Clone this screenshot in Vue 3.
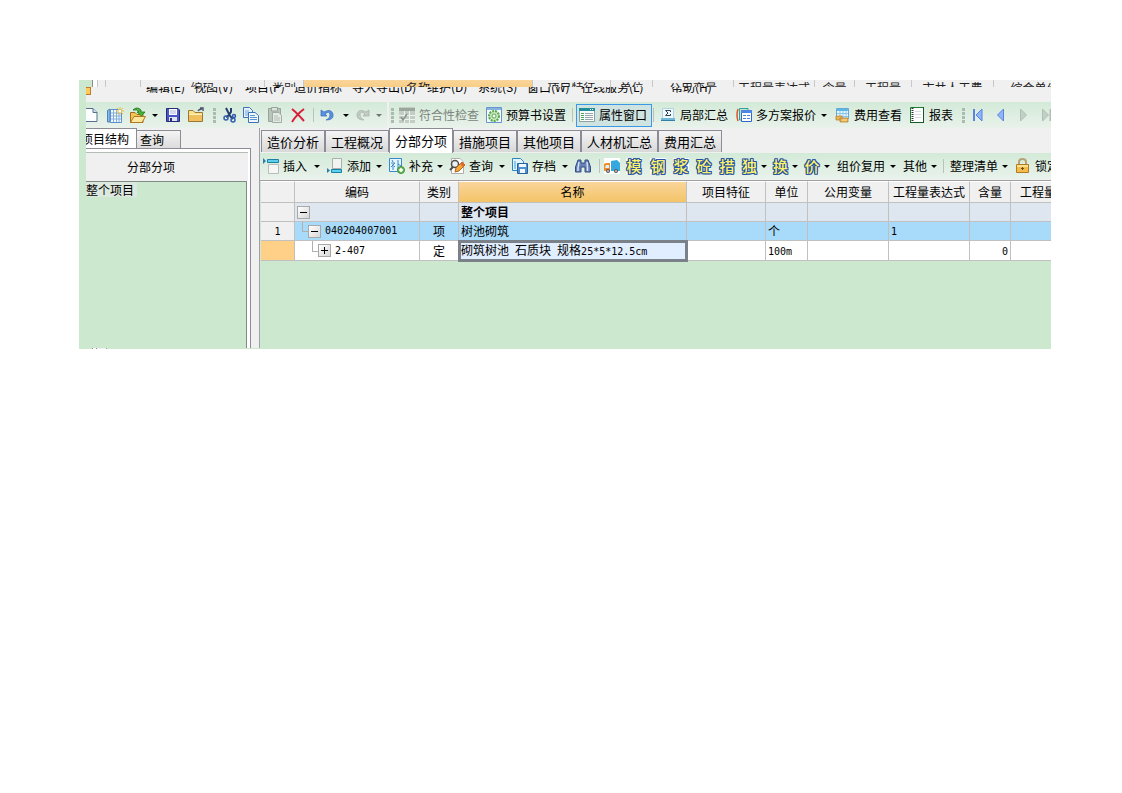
<script setup>
const menus = ['编辑(E)', '视图(V)', '项目(P)', '造价指标', '导入导出(D)', '维护(D)', '系统(S)', '窗口(W)', '在线服务(L)', '帮助(H)']
const strip = ['', '', '', '', '编码', '类别', '名称', '项目特征', '单位', '公用变量', '工程量表达式', '含量', '工程量', '市井人工费', '综合单价']
const tabs = ['造价分析', '工程概况', '分部分项', '措施项目', '其他项目', '人材机汇总', '费用汇总']
const heads = ['', '编码', '类别', '名称', '项目特征', '单位', '公用变量', '工程量表达式', '含量', '工程量']
const seals = ['模', '钢', '浆', '砼', '措', '独', '换', '价']
</script>

<template>
  <main class="shot">
    <div class="strip">
      <span v-for="(s, i) in strip" :key="i" :class="{ hot: s === '名称', leaf: i === 0, blank: i === 1 }">{{ s }}</span>
    </div>
    <nav class="menu">
      <span class="app-mark"></span>
      <button v-for="m in menus" :key="m">{{ m }}</button>
    </nav>

    <div class="bar bar-main">
      <button aria-label="新建"><svg viewBox="0 0 16 16"><path d="M-2 1.500H7L11 5.500V14.500H-2z" fill="#fdfeff" stroke="#56708f" /><path d="M7 1.500V5.500H11" fill="#d4e1f3" stroke="#56708f" /></svg></button>
      <button aria-label="新建项目"><svg class="wide" viewBox="0 0 18 16"><path d="M1.500 3.500L4 2V15H1.500z" fill="#89b9e7" stroke="#4a83bd" /><path d="M4.500 2.500H15.500V15.500H4.500z" fill="#f5faff" stroke="#5990c9" /><path d="M7.500 3V15M10.500 3V15M13 3V15M5 6H15M5 9H15M5 12H15" stroke="#83aedb" /><path d="M14 0V8M10 4H18M11 1L17 7M17 1L11 7" stroke="#f0bd3e" stroke-width="1" /><circle cx="14" cy="4" r="1.500" fill="#fffbe5" /></svg></button>
      <button aria-label="打开"><svg viewBox="0 0 16 16"><path d="M.5 15.500V5.500H5L7 7.500H13V15.500z" fill="#f2c551" stroke="#a66d1f" /><path d="M.5 15.500L4 9.500H15.500L12 15.500z" fill="#ffe79b" stroke="#b17923" /><path d="M3 3Q7 -1 11 3V5H15L11.500 9L7 5H9Q7 2 3 3z" fill="#4fb63b" stroke="#17731d" stroke-width=".8" /></svg><i></i></button>
      <button aria-label="保存"><svg viewBox="0 0 16 16"><path d="M1.500 1.500H13L14.500 3V14.500H1.500z" fill="#4a56c6" stroke="#252c78" /><path d="M4 2H12V8H4z" fill="#fff" /><path d="M5 4H11M5 6H11" stroke="#a8b4d7" /><path d="M4 10H12V14H4z" fill="#dfe4ef" /><path d="M5 11H7V14H5z" fill="#29317f" /></svg></button>
      <button aria-label="文件夹"><svg viewBox="0 0 16 16"><path d="M.5 14.500V3.500H5L7 5.500H14.500V14.500z" fill="#fde08a" stroke="#9c7738" /><path d="M1 8H14V14H1z" fill="#efc05b" /><path d="M1 7.500H14" stroke="#fff2bf" /><path d="M10 4Q11 2 14 2M12 1H15V4" fill="none" stroke="#49566d" stroke-width="1.500" /></svg></button>
      <span class="grip"></span>
      <button aria-label="剪切"><svg viewBox="0 0 16 16"><path d="M4 1L8 9L11 12M9 1V5L6 9L4 10" fill="none" stroke="#243f70" stroke-width="2" /><circle cx="4" cy="11" r="2" fill="none" stroke="#315fad" stroke-width="1.500" /><circle cx="11" cy="13" r="2" fill="none" stroke="#315fad" stroke-width="1.500" /><circle cx="12" cy="9" r="1.500" fill="none" stroke="#315fad" stroke-width="1.500" /></svg></button>
      <button aria-label="复制"><svg viewBox="0 0 16 16"><path d="M.5.5H6.500L9.500 3.500V10.500H.5z" fill="#e6f0ff" stroke="#3974b9" /><path d="M2 4H6M2 6H7M2 8H5" stroke="#6fa4dd" /><path d="M5.500 5.500H12L15.500 8.500V15.500H5.500z" fill="#f2f7ff" stroke="#3974b9" /><path d="M7 8.500H12M7 10.500H14M7 12.500H14" stroke="#5995d4" /></svg></button>
      <button aria-label="粘贴"><svg viewBox="0 0 16 16"><path d="M1.500 1.500H13.500V14.500H1.500z" fill="#b9c4bb" stroke="#98a49b" /><path d="M4.500.5H10.500V4H4.500z" fill="#dce3dc" stroke="#98a49b" /><path d="M5.500 5.500H12L14.500 8.500V15.500H5.500z" fill="#e4eae4" stroke="#a1aca2" /><path d="M7 9H11M7 11H13M7 13H13" stroke="#b5beb6" /></svg></button>
      <button aria-label="删除"><svg viewBox="0 0 16 16"><path d="M2 2Q7 6 14 14M14 2Q7 7 2 15" fill="none" stroke="#d8203a" stroke-width="2" /></svg></button>
      <span class="sep"></span>
      <button aria-label="撤销"><svg viewBox="0 0 16 16"><path d="M2 3V9H8L6 7Q11 3 11 8Q11 12 7 13Q15 13 14 7Q12 1 5 5z" fill="#5a91e4" stroke="#3769b5" stroke-width=".7" /></svg><i></i></button>
      <button class="off redo" aria-label="重做" disabled><svg viewBox="0 0 16 16"><path d="M13 3V9H7L9 7Q4 3 4 8Q4 12 8 13Q0 13 1 7Q3 1 10 5z" fill="#c1cbc2" stroke="#a5b0a6" stroke-width=".7" /></svg><i></i></button>
      <span class="joint"></span>
      <span class="grip"></span>
      <button class="off" disabled><svg viewBox="0 0 16 16"><path d="M0 0H16V16H0z" fill="#c3cdc4" /><path d="M0 1H16V4H0z" fill="#9ba79d" /><path d="M0 8.500H16M0 12.500H16M5.500 4V16M10.500 4V16" stroke="#edf2ed" /><path d="M2 10L4 13L8 7" fill="none" stroke="#849287" stroke-width="1.500" /></svg>符合性检查</button>
      <button><svg viewBox="0 0 16 16"><path d="M.5.5H15.500V15.500H.5z" fill="#f6fbf7" stroke="#6795cb" /><path d="M1 1H15V3H1z" fill="#85b2e3" /><circle cx="8" cy="9" r="5" fill="#c7e7ba" stroke="#57a951" stroke-width="2" stroke-dasharray="2 1" /><circle cx="8" cy="9" r="2" fill="#fff" stroke="#57a951" /></svg>预算书设置</button>
      <span class="sep"></span>
      <button class="picked"><svg viewBox="0 0 16 16"><path d="M.5 1.500H15.500V14.500H.5z" fill="#fafcfb" stroke="#8ba19c" /><path d="M0 1H16V4H0z" fill="#238c99" /><path d="M11 2.500H15" stroke="#fff" stroke-dasharray="1 1" /><path d="M2 6.500H5M2 8.500H5M2 10.500H5M2 12.500H5" stroke="#4ba65a" /><path d="M6 6.500H14M6 8.500H14M6 10.500H14M6 12.500H14" stroke="#9aa5ad" /></svg>属性窗口</button>
      <span class="sep"></span>
      <button><svg viewBox="0 0 16 16"><path d="M2.500 1.500H13.500V11.500H2.500z" fill="#eef8ff" stroke="#b5d2df" /><path d="M10.500 5V3.500H5.500L8 6L5.500 8.500H10.500V7" fill="none" stroke="#34434f" /><path d="M1 11H15V14H1z" fill="#70b7d9" /><path d="M1 13.500H15" stroke="#347fa8" /></svg>局部汇总</button>
      <button><svg viewBox="0 0 16 16"><path d="M2 2Q0 8 2 14" fill="none" stroke="#e2572a" stroke-width="1.500" /><path d="M3.500 1.500H12V13H3.500z" fill="#c6e7c1" stroke="#2fa1a1" /><path d="M5.500 3.500H15.500V14.500H5.500z" fill="#fff" stroke="#3266d0" /><path d="M5 3H16V6H5z" fill="#4d86e7" /><path d="M7 8.500H10M11 8.500H14M7 11.500H10M11 11.500H14" stroke="#4c7ed9" /></svg>多方案报价<i></i></button>
      <button><svg viewBox="0 0 16 16"><path d="M2.500 1.500H14.500V11.500H2.500z" fill="#e9f7ff" stroke="#65a9d5" /><path d="M3 2H14V4H3z" fill="#5eb6e8" /><path d="M3 6.500H14M3 9.500H14M6 4V11M9 4V11M12 4V11" stroke="#8bc5e7" /><path d="M2 9H8V13H2zM6 11H14V15H6z" fill="#e7b557" stroke="#b47b2b" stroke-width=".7" /><path d="M7 13H13" stroke="#fbe3a0" /></svg>费用查看</button>
      <button><svg viewBox="0 0 16 16"><path d="M1.500.5H14.500V15.500H1.500z" fill="#fff" stroke="#1d7c32" /><path d="M14.500 0V16M1 15.500H15" stroke="#195725" /><path d="M3.500 1V15" stroke="#333" stroke-width="2" stroke-dasharray="1 1" /><path d="M6 4.500H12M6 7.500H12M6 10.500H12" stroke="#d4dcde" /></svg>报表</button>
      <span class="grip tail"></span>
      <button aria-label="第一条"><svg viewBox="0 0 16 16"><path d="M4 2V14" stroke="#5985df" stroke-width="2" /><path d="M12 2V14L6 8z" fill="#91b3fa" stroke="#5985df" /></svg></button>
      <button aria-label="上一条"><svg viewBox="0 0 16 16"><path d="M9.500 2V14L3.500 8z" fill="#91b3fa" stroke="#5985df" /></svg></button>
      <button aria-label="下一条" disabled><svg viewBox="0 0 16 16"><path d="M1.500 2V14L7.500 8z" fill="#c2cfc4" stroke="#b1beb3" /></svg></button>
      <button aria-label="最后一条" disabled><svg viewBox="0 0 16 16"><path d="M1.500 2V14L7.500 8z" fill="#c2cfc4" stroke="#b1beb3" /><path d="M9.500 2V14" stroke="#b1beb3" stroke-width="2" /></svg></button>
    </div>

    <div class="body">
      <aside class="side">
        <div class="side-tabs">
          <button class="on">项目结构</button>
          <button>查询</button>
        </div>
        <div class="side-frame">
          <h2>分部分项</h2>
          <div class="tree"><button>整个项目</button></div>
        </div>
      </aside>

      <section class="work">
        <div class="tabs">
          <button v-for="t in tabs" :key="t" :class="{ on: t === '分部分项' }">{{ t }}</button>
        </div>

        <div class="bar bar-work">
          <button><svg viewBox="0 0 16 16"><path d="M0 0L3 3L0 6z" fill="#2d7eae" /><path d="M4.500 1.500H15.500V4.500H4.500z" fill="#5dd0ee" stroke="#1b80a5" /><path d="M5.500 6.500H15.500V15.500H5.500z" fill="#f5f6f5" stroke="#b6bfb9" /></svg>插入<i></i></button>
          <button><svg viewBox="0 0 16 16"><path d="M5.500 .5H14.500V10.500H5.500z" fill="#f2f4f2" stroke="#a8b2ad" /><path d="M0 10L3 12.500L0 15z" fill="#2d7eae" /><path d="M4.500 11.500H14.500V14.500H4.500z" fill="#5dd0ee" stroke="#1b80a5" /></svg>添加<i></i></button>
          <button><svg viewBox="0 0 16 16"><path d="M.5.5H12.500V13.500H.5z" fill="#e7f5ff" stroke="#3789c7" /><path d="M3 2L4 4M2 5H6L2 9M4 6V12M5 8L6 9M9 2V12M9 6L12 8" fill="none" stroke="#3789c7" /><circle cx="12" cy="12" r="3.500" fill="#70bb59" stroke="#438e3e" /><path d="M12 10V14M10 12H14" stroke="#fff" stroke-width="1.500" /></svg>补充<i></i></button>
          <button><svg viewBox="0 0 16 16"><path d="M2.500.5H11L14.500 4V15.500H2.500z" fill="#fff" stroke="#b1afae" /><circle cx="6" cy="6" r="3.500" fill="#eaf1f5" stroke="#514b4b" stroke-width="1.500" /><path d="M4 9L1 12" stroke="#514b4b" stroke-width="2" /><path d="M6 14L7 10L13 4L16 7L10 13z" fill="#f6a832" stroke="#ad6520" /><path d="M13 4L16 7L14 9L11 6z" fill="#e36a30" /></svg>查询<i></i></button>
          <button><svg viewBox="0 0 16 16"><path d="M.5.5H8.500L11.500 3.500V12.500H.5z" fill="#e3f3fd" stroke="#2d83bb" /><path d="M2 3H4V11H2z" fill="#91c8e7" /><path d="M5.500 5.500H15.500V15.500H5.500z" fill="#528fce" stroke="#285f9f" /><path d="M7 6H14V9H7zM8 11H13V15H8z" fill="#eef7ff" /></svg>存档<i></i></button>
          <button aria-label="查找"><svg viewBox="0 0 16 16"><path d="M3 2H6V5H10V2H13L15.500 9V14H10V9H6V14H.5V9z" fill="#6983b9" stroke="#354d82" /><path d="M4 4L3 10V13M12 4L12.500 10V13" fill="none" stroke="#d6e2f6" stroke-width="1.500" /></svg></button>
          <span class="sep"></span>
          <button aria-label="运输"><svg viewBox="0 0 16 16"><path d="M0 0H16V16H0z" fill="#fff" /><path d="M7 3L13 2L16 5V13H7z" fill="#35a9df" /><path d="M0 6L2 5H6V13H0z" fill="#f18b2b" /><path d="M2 7H5V10H1z" fill="#d9f2fb" /><circle cx="4" cy="13" r="2" fill="#555" /><circle cx="12" cy="13" r="2" fill="#555" /><path d="M3 13H5M11 13H13" stroke="#fff" /></svg></button>
          <button v-for="(s, i) in seals" :key="s" class="seal" :class="{ paper: i < 3 }"><b>{{ s }}</b><i v-if="i > 4"></i></button>
          <button>组价复用<i></i></button>
          <button>其他<i></i></button>
          <span class="sep"></span>
          <button>整理清单<i></i></button>
          <button><svg viewBox="0 0 16 16"><path d="M4 7V4Q4 1 7.500 1Q11 1 11 4V7" fill="none" stroke="#b9a276" stroke-width="2" /><path d="M1.500 6.500H13.500V14.500H1.500z" fill="#f4bd4b" stroke="#b27b24" /><path d="M2 8H13" stroke="#ffe08d" stroke-width="2" /><path d="M7.500 9V12M6 10.500H9" stroke="#714b20" /></svg>锁定</button>
        </div>

        <div class="sheet">
          <table>
            <colgroup>
              <col class="c-no"><col class="c-code"><col class="c-kind"><col class="c-name"><col class="c-mark"><col class="c-unit"><col class="c-var"><col class="c-expr"><col class="c-qty"><col class="c-last">
            </colgroup>
            <thead>
              <tr><th v-for="(h, i) in heads" :key="i" :class="{ hot: h === '名称' }">{{ h }}</th></tr>
            </thead>
            <tbody>
              <tr class="total">
                <th></th>
                <td><div class="node"><button class="fold" aria-label="收起"></button></div></td>
                <td></td><td><strong>整个项目</strong></td><td></td><td></td><td></td><td></td><td></td><td></td>
              </tr>
              <tr class="item">
                <th><code>1</code></th>
                <td><div class="node deep"><button class="fold" aria-label="收起"></button><code>040204007001</code></div></td>
                <td class="mid">项</td><td>树池砌筑</td><td></td><td>个</td><td></td><td><code>1</code></td><td></td><td></td>
              </tr>
              <tr class="quota">
                <th></th>
                <td><div class="node deeper"><button class="fold plus" aria-label="展开"></button><code>2-407</code></div></td>
                <td class="mid">定</td>
                <td class="edit">砌筑树池<code>&nbsp;</code>石质块<code>&nbsp;</code>规格<code>25*5*12.5cm</code></td>
                <td></td><td><code>100m</code></td><td></td><td></td><td class="num"><code>0</code></td><td></td>
              </tr>
            </tbody>
          </table>
        </div>
      </section>
    </div>
    <div class="foot"></div>
  </main>
</template>

<style>
body { background: #fff; }
</style>

<style scoped>
* { box-sizing: border-box; }
.shot {
  margin: 80px 71px 0 79px;
  padding-left: 7px;
  background: #cce8cf;
  overflow: hidden;
  font: 12px/16px "Noto Sans CJK SC", sans-serif;
  color: #000;
}
button {
  margin: 0; padding: 0; border: 0; background: none;
  font: inherit; color: inherit; white-space: nowrap;
}
.strip {
  display: grid;
  grid-template-columns: 7px 5px 8px 35px 124px 39px 229px 78px 42px 81px 81px 40px 57px 82px 82px;
  height: 7px;
  overflow: hidden;
  background: #f0f0f0;
  color: #222;
  text-align: center;
  line-height: 16px;
}
.strip span { border-right: 1px solid #c8c8c8; white-space: nowrap; }
.strip .leaf { background: #cce8cf; border-color: #8c8c96; }
.strip .blank { background: #fff; }
.hot { background: linear-gradient(#fad59b, #f3c467); }
.menu {
  display: grid;
  grid-template-columns: 60px 48px 51px 49px 58px 75px 51px 49px 54px 90px 60px;
  height: 15px;
  overflow: hidden;
  background: #f0f0f0;
}
.menu button { height: 16px; margin-top: -8px; line-height: 16px; text-align: left; }
.app-mark { width: 5px; height: 8px; border: 1px solid #c17b22; border-left: 0; background: #ffc95c; }

.bar {
  display: grid;
  align-items: center;
  height: 26px;
  overflow: hidden;
  background: linear-gradient(#d3ead8, #e9f2eb);
}
.bar-main {
  padding-bottom: 2px;
  grid-template-columns: 20px 24px 35px 23px 25px 9px 21px 24px 23px 22px 7px 37px 31px 4px 8px 87px 85px 5px 76px 8px 76px 98px 75px 52px 9px 24px 25px 22px 16px;
}
.bar-work {
  grid-template-columns: 64px 62px 60px 63px 63px 23px 6px 22px 24px 23px 23px 23px 23px 31px 31px 33px 66px 39px 8px 65px 60px;
  padding-left: 3px;
  margin-bottom: 1px;
}
.bar button { display: flex; align-items: center; gap: 4px; height: 24px; }
.bar svg { flex: none; width: 16px; height: 16px; }
.bar .wide { width: 18px; }
.bar i {
  flex: none; margin: 0 7px 0 auto;
  border: 3px solid transparent; border-top-color: #000; border-bottom: 0;
}
.off { color: #7d857e; }
.off i { border-top-color: #6f7770; }
.redo i { margin-right: 5px; }
.sep { width: 1px; height: 14px; margin-left: 1px; background: #b9c2bb; }
.joint { height: 26px; background: #f0f0f0; width: 2px; }
.grip { width: 3px; height: 15px; background: repeating-linear-gradient(#a9bcae 0 3px, transparent 3px 4px); }
.tail { margin-left: 1px; }
.bar .picked { height: 23px; padding: 0 2px; border: 1px solid #3c97e6; background: #cfe4e0; }
.seal b {
  width: 16px; height: 16px; font-size: 15px; font-weight: 500; line-height: 16px; color: #fff36a;
  text-shadow: 1px 0 #2451a3, -1px 0 #2451a3, 0 1px #2451a3, 0 -1px #2451a3, 1px 1px #2451a3, -1px -1px #2451a3, 1px -1px #2451a3, -1px 1px #2451a3;
}
.paper b { background: #fff; }

.body { display: flex; height: 220px; background: #f0f0f0; }
.side { flex: none; display: flex; flex-direction: column; width: 165px; }
.side-tabs { display: flex; align-items: flex-end; height: 20px; }
.side-tabs button {
  width: 44px; height: 18px; padding-left: 3px; overflow: hidden;
  border: 1px solid #8c8c96; border-width: 1px 1px 0 0;
  background: linear-gradient(#f4f4f4, #dcdcdc); line-height: 18px; text-align: left;
}
.side-tabs .on {
  display: flex; justify-content: flex-end; align-items: center;
  width: 51px; height: 20px; padding: 0 7px 0 0; background: #fff;
}
.side-frame {
  flex: 1; display: flex; flex-direction: column;
  border: 1px solid #8c8c96; border-width: 1px 1px 0 0; padding: 3px 2px 0 0; background: #fff;
}
.side-frame h2 {
  margin: 0; height: 29px; padding-right: 32px; border-top: 1px solid #b4bcb6; background: #f0f0f0;
  font-size: 12px; font-weight: 400; line-height: 28px; text-align: center;
}
.tree {
  flex: 1; margin-right: 1px; background: #cce8cf;
  border: 1px solid #7f8c86; border-width: 1px 1px 0 0;
}
.tree button { display: block; width: 51px; height: 15px; border-radius: 2px; background: #dde9df; line-height: 15px; text-align: left; }

.work { flex: 1; min-width: 0; display: flex; flex-direction: column; margin-left: 8px; border-left: 1px solid #a0a0a8; }
.tabs { display: flex; align-items: flex-end; height: 25px; padding: 0 0 1px 1px; font-size: 13px; }
.tabs button {
  flex: none; height: 22px; padding: 0 5px; border: 1px solid #8c8c96; border-bottom: 0;
  background: linear-gradient(#f4f4f4, #d8d8d8); line-height: 20px;
}
.tabs .on { height: 25px; margin-bottom: -1px; background: #fff; }

.sheet { flex: 1; overflow: hidden; border-top: 1px solid #a0a0a0; background: #cce8cf; }
table { width: 850px; table-layout: fixed; border-collapse: separate; border-spacing: 0; margin-left: 1px; }
.c-no { width: 34px; } .c-code { width: 125px; } .c-kind { width: 39px; } .c-name { width: 228px; }
.c-mark { width: 79px; } .c-unit { width: 42px; } .c-var { width: 81px; } .c-expr { width: 81px; }
.c-qty { width: 41px; } .c-last { width: 100px; }
th, td {
  height: 19px; padding: 0 2px; overflow: hidden; white-space: nowrap;
  border: 1px solid #c0c0c0; border-width: 0 1px 1px 0;
  font-weight: 400; line-height: 16px; text-align: left;
}
th { background: #f0f0f0; text-align: center; }
thead th { height: 22px; padding: 0; border-top: 1px solid #fff; }
thead th:last-child { padding-left: 9px; text-align: left; }
thead .hot { background: linear-gradient(#fad59b, #f3c467); }
.total td { background: #dee6f0; }
.item td { background: #a8dafa; }
.quota td { height: 20px; background: #fff; }
.quota th { background: #ffd088; }
.quota .edit { padding: 0 0 0 2px; border: 0; outline: 3px solid #7b8188; outline-offset: -2px; background: #e0eeff; }
.mid { text-align: center; }
.num { text-align: right; }
code { font: 10px/16px "DejaVu Sans Mono", monospace; }
.node { display: flex; align-items: center; gap: 4px; height: 18px; }
.deep { padding-left: 10px; }
.deeper { padding-left: 20px; }
.fold {
  position: relative; flex: none; width: 13px; height: 13px;
  border: 1px solid #a8a8a8; background: linear-gradient(135deg, #fff, #d6d6d6);
}
.fold::before, .plus::after { content: ""; position: absolute; left: 2px; top: 5px; width: 7px; height: 1px; background: #000; }
.plus::after { left: 5px; top: 2px; width: 1px; height: 7px; }
.deep::before, .deeper::before { content: ""; width: 5px; height: 10px; margin: -9px -4px 0 -5px; border: 1px solid #b0b0b0; border-width: 0 0 1px 1px; }
.foot { width: 15px; height: 1px; margin-left: 6px; background: linear-gradient(90deg, #8c8c96 1px, #fff 1px 4px, #8c8c96 4px 5px, #f0f0f0 5px 14px, #a0a0a8 14px); }
</style>
